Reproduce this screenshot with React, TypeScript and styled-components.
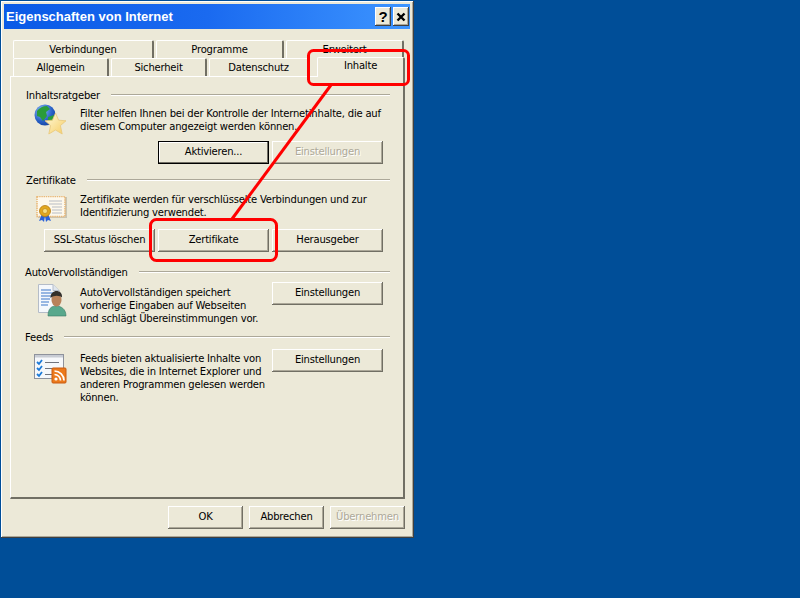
import React from "react";
import styled, { createGlobalStyle } from "styled-components";

const Global = createGlobalStyle`
  html, body { margin: 0; padding: 0; background: #fff; }
  body { font-family: "DejaVu Sans", "Liberation Sans", sans-serif; font-size: 10px; letter-spacing: -0.2px; color: #000; }
`;

const Desktop = styled.div`
  position: relative;
  width: 800px;
  height: 598px;
  background: #004e98;
  overflow: hidden;
  padding: 1px;
  box-sizing: border-box;
`;

const Win = styled.div`
  width: 413px;
  height: 537px;
  box-sizing: border-box;
  background: #ece9d8;
  padding: 3px 4px 4px 3px;
  display: flex;
  flex-direction: column;
  box-shadow: inset -1px -1px 0 #404040, inset 1px 1px 0 #fff, inset -2px -2px 0 #aca899;
`;

const TitleBar = styled.div`
  height: 25px;
  flex: none;
  background: linear-gradient(90deg, #0a5ae6 0%, #1a6af0 50%, #3d95ff 100%);
  display: flex;
  align-items: center;
  padding: 0 1px 0 2px;
  gap: 2px;
`;

const Title = styled.div`
  flex: 1;
  color: #fff;
  font: bold 13px "Liberation Sans", sans-serif;
  letter-spacing: 0;
`;

const CapButton = styled.div`
  width: 16px;
  height: 19px;
  background: #ece9d8;
  box-shadow: inset -1px -1px 0 #404040, inset 1px 1px 0 #fff, inset -2px -2px 0 #aca899;
  display: flex;
  align-items: center;
  justify-content: center;
  font: bold 15px "Liberation Sans", sans-serif;
  color: #000;
`;

const Body = styled.div`
  flex: 1;
  display: flex;
  flex-direction: column;
  padding: 11px 5px 0 6px;
`;

const TabRow = styled.div<{ $h: number }>`
  display: flex;
  align-items: flex-end;
  height: ${(p) => p.$h}px;
  padding-left: 3px;
  gap: 2px;
`;

const Tab = styled.div<{ $w: number; $active?: boolean; $gap?: number }>`
  width: ${(p) => p.$w}px;
  height: ${(p) => (p.$active ? 20 : 18)}px;
  margin-left: ${(p) => p.$gap ?? 0}px;
  box-sizing: border-box;
  background: #ece9d8;
  border-top: 1px solid #fff;
  border-left: 1px solid #fff;
  border-right: 2px solid #716f64;
  border-radius: 2px 2px 0 0;
  display: flex;
  justify-content: center;
  padding-top: ${(p) => (p.$active ? 1 : 2)}px;
  line-height: 13px;
  position: relative;
  z-index: ${(p) => (p.$active ? 2 : 1)};
  margin-bottom: ${(p) => (p.$active ? -1 : 0)}px;
`;

const Panel = styled.div`
  height: 423px;
  box-sizing: border-box;
  border-top: 1px solid #fff;
  border-left: 1px solid #fff;
  border-right: 2px solid #716f64;
  border-bottom: 2px solid #716f64;
  padding: 11px 13px 0 14px;
  display: flex;
  flex-direction: column;
`;

const Legend = styled.div<{ $top: number; $indent?: number }>`
  display: flex;
  align-items: center;
  gap: 11px;
  height: 14px;
  margin-top: ${(p) => p.$top}px;
  padding-left: ${(p) => p.$indent ?? 0}px;
  white-space: nowrap;
`;

const Rule = styled.div`
  flex: 1;
  height: 0;
  border-top: 1px solid #aca899;
  border-bottom: 1px solid #fff;
`;

const Row = styled.div`
  display: flex;
`;

const IconCell = styled.div<{ $top: number; $left?: number }>`
  width: 55px;
  flex: none;
  padding: ${(p) => p.$top}px 0 0 ${(p) => p.$left ?? 8}px;
  box-sizing: border-box;
  svg { display: block; }
`;

const Text = styled.p<{ $w: number; $top: number }>`
  margin: ${(p) => p.$top}px 0 0;
  width: ${(p) => p.$w}px;
  line-height: 13px;
  flex: none;
`;

const Btn = styled.div<{ $w?: number; $default?: boolean; $disabled?: boolean }>`
  width: ${(p) => p.$w ?? 111}px;
  height: 23px;
  flex: none;
  box-sizing: border-box;
  padding-bottom: 2px;
  background: #ece9d8;
  display: flex;
  align-items: center;
  justify-content: center;
  white-space: nowrap;
  box-shadow: ${(p) =>
    p.$default
      ? "inset 0 0 0 1px #000, inset -2px -2px 0 #716f64, inset 2px 2px 0 #fff"
      : "inset -1px -1px 0 #716f64, inset 1px 1px 0 #fff, inset -2px -2px 0 #aca899"};
  color: ${(p) => (p.$disabled ? "#aca899" : "#000")};
  text-shadow: ${(p) => (p.$disabled ? "1px 1px 0 #fff" : "none")};
`;

const BtnRow = styled.div<{ $left: number; $top: number }>`
  display: flex;
  gap: 3px;
  padding-left: ${(p) => p.$left}px;
  margin-top: ${(p) => p.$top}px;
`;

const SideBtn = styled.div<{ $top: number }>`
  margin: ${(p) => p.$top}px 0 0 6px;
  flex: none;
`;

const Footer = styled.div`
  display: flex;
  justify-content: flex-end;
  gap: 6px;
  padding-top: 7px;
`;

const Overlay = styled.svg`
  position: absolute;
  left: 0;
  top: 0;
  pointer-events: none;
  z-index: 5;
`;

const GlobeIcon = () => (
  <svg width="36" height="36" viewBox="0 0 36 36">
    <defs>
      <radialGradient id="gl" cx="0.35" cy="0.3" r="0.8">
        <stop offset="0" stopColor="#8fc0f4" />
        <stop offset="0.6" stopColor="#2a62c8" />
        <stop offset="1" stopColor="#123f9c" />
      </radialGradient>
      <linearGradient id="st" x1="0" y1="0" x2="1" y2="1">
        <stop offset="0" stopColor="#fffbe0" />
        <stop offset="1" stopColor="#f6cd62" />
      </linearGradient>
    </defs>
    <circle cx="12" cy="11" r="10.5" fill="url(#gl)" />
    <path d="M4 7 Q8 2 14 2 L17 5 L13 8 L14 12 L10 17 L7 13 L4 12 Z M15 13 L21 11 L20 17 L15 19 Z" fill="#2a9c3a" />
    <path d="M22.5 9 L25.6 16.2 L33 16.8 L27.4 21.6 L29.2 30 L22.5 26 L15.8 30 L17.6 21.6 L12 16.8 L19.4 16.2 Z" fill="url(#st)" stroke="#e8c87a" strokeWidth="0.8" />
  </svg>
);

const CertIcon = () => (
  <svg width="36" height="30" viewBox="0 0 36 30">
    <rect x="3" y="1" width="29" height="21" fill="#c8c4b4" />
    <rect x="2" y="0.5" width="28" height="20" fill="#fdf8ec" stroke="#e9b878" strokeWidth="1.6" strokeDasharray="1.4 0.8" />
    <path d="M14 5h13M14 8h13M17 11h10M17 14h10M17 17h10" stroke="#b8bcc4" strokeWidth="1.2" />
    <path d="M7 18l-3 7 3-1 2 2 1-6zM13 18l3 7-3-1-2 2-1-6z" fill="#2a62d8" />
    <circle cx="10" cy="15" r="5.5" fill="#e2a81e" stroke="#b57a10" strokeWidth="0.8" />
    <circle cx="10" cy="15" r="2.5" fill="#f7de7e" stroke="#b57a10" strokeWidth="0.6" />
  </svg>
);

const AutoIcon = () => (
  <svg width="36" height="36" viewBox="0 0 36 36">
    <path d="M5.5 1.5H20L26 7.5V29.5H5.5Z" fill="#f5f8fc" stroke="#b4bcc8" />
    <path d="M20 1.5V7.5H26" fill="#dfe5ec" stroke="#b4bcc8" />
    <path d="M8 7h10M8 10h12M8 13h10M8 16h9M8 19h8M8 22h7" stroke="#3d77c8" strokeWidth="1.2" />
    <path d="M15 33c0-7 3-10 8-10s10 3 10 10z" fill="#58a88c" stroke="#3b7a64" strokeWidth="0.6" />
    <ellipse cx="23.5" cy="17" rx="5" ry="6.5" fill="#b8825a" />
    <path d="M17.5 15c0-5 3-7 6-7s6 2 5.5 6.5c-2-2-7.5-3-11.5.5z" fill="#33302c" />
  </svg>
);

const FeedIcon = () => (
  <svg width="36" height="36" viewBox="0 0 36 36">
    <rect x="1.5" y="1.5" width="29" height="24" fill="#f6f8fb" stroke="#8e929c" />
    <rect x="2" y="2" width="28" height="2.5" fill="#c8ccd4" />
    <path d="M4 9l2 2 3-4M4 15l2 2 3-4M4 21l2 2 3-4" stroke="#1c7ad8" strokeWidth="1.8" fill="none" />
    <path d="M12 9.5h14M12 15.5h14M12 21.5h8" stroke="#70747e" strokeWidth="1.2" />
    <rect x="19" y="15" width="14" height="15" rx="1" fill="#ec7a1c" stroke="#c85a10" />
    <circle cx="23" cy="26" r="1.6" fill="#fff" />
    <path d="M21.5 21.5a6 6 0 0 1 6 6M21.5 18a9.5 9.5 0 0 1 9.5 9.5" stroke="#fff" strokeWidth="1.7" fill="none" />
  </svg>
);

export default function App() {
  return (
    <Desktop>
      <Global />
      <Win>
        <TitleBar>
          <Title>Eigenschaften von Internet</Title>
          <CapButton>?</CapButton>
          <CapButton>
            <svg width="10" height="10" viewBox="0 0 10 10">
              <path d="M1.5 1.5l7 7M8.5 1.5l-7 7" stroke="#000" strokeWidth="2.4" />
            </svg>
          </CapButton>
        </TitleBar>
        <Body>
          <TabRow $h={18}>
            <Tab $w={141}>Verbindungen</Tab>
            <Tab $w={128}>Programme</Tab>
            <Tab $w={118}>Erweitert</Tab>
          </TabRow>
          <TabRow $h={18}>
            <Tab $w={96}>Allgemein</Tab>
            <Tab $w={96}>Sicherheit</Tab>
            <Tab $w={100}>Datenschutz</Tab>
            <Tab $w={88} $active $gap={6}>Inhalte</Tab>
          </TabRow>
          <Panel>
            <Legend $top={0} $indent={1}>Inhaltsratgeber<Rule /></Legend>
            <Row>
              <IconCell $top={2}><GlobeIcon /></IconCell>
              <Text $w={310} $top={5}>
                Filter helfen Ihnen bei der Kontrolle der Internetinhalte, die auf diesem Computer angezeigt werden können.
              </Text>
            </Row>
            <BtnRow $left={133} $top={1}>
              <Btn $default>Aktivieren...</Btn>
              <Btn $disabled>Einstellungen</Btn>
            </BtnRow>
            <Legend $top={9} $indent={1}>Zertifikate<Rule /></Legend>
            <Row>
              <IconCell $top={9} $left={10}><CertIcon /></IconCell>
              <Text $w={310} $top={6}>
                Zertifikate werden für verschlüsselte Verbindungen und zur Identifizierung verwendet.
              </Text>
            </Row>
            <BtnRow $left={19} $top={3}>
              <Btn $w={111}>SSL-Status löschen</Btn>
              <Btn>Zertifikate</Btn>
              <Btn>Herausgeber</Btn>
            </BtnRow>
            <Legend $top={13}>AutoVervollständigen<Rule /></Legend>
            <Row>
              <IconCell $top={4}><AutoIcon /></IconCell>
              <Text $w={186} $top={7}>
                AutoVervollständigen speichert vorherige Eingaben auf Webseiten und schlägt Übereinstimmungen vor.
              </Text>
              <SideBtn $top={3}><Btn>Einstellungen</Btn></SideBtn>
            </Row>
            <Legend $top={5}>Feeds<Rule /></Legend>
            <Row>
              <IconCell $top={9}><FeedIcon /></IconCell>
              <Text $w={186} $top={8}>
                Feeds bieten aktualisierte Inhalte von Websites, die in Internet Explorer und anderen Programmen gelesen werden können.
              </Text>
              <SideBtn $top={5}><Btn>Einstellungen</Btn></SideBtn>
            </Row>
          </Panel>
          <Footer>
            <Btn $w={75}>OK</Btn>
            <Btn $w={75}>Abbrechen</Btn>
            <Btn $w={75} $disabled>Übernehmen</Btn>
          </Footer>
        </Body>
      </Win>
      <Overlay width="800" height="598" viewBox="0 0 800 598">
        <g fill="none" stroke="#f00" strokeWidth="3">
          <rect x="308.5" y="50.5" width="100" height="34" rx="5" />
          <rect x="150.5" y="219.5" width="126" height="41" rx="6" />
          <path d="M331 85L232 219" />
        </g>
      </Overlay>
    </Desktop>
  );
}
